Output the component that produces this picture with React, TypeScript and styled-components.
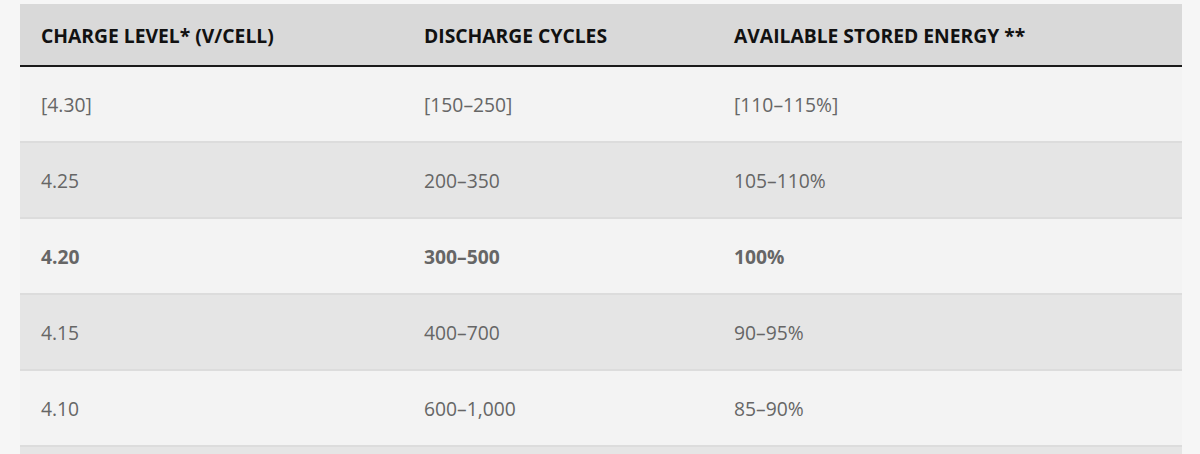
import styled, { createGlobalStyle } from "styled-components";

type TRow = {
  level: string;
  cycles: string;
  energy: string;
  strong?: boolean;
};

const ROWS: TRow[] = [
  { level: "[4.30]", cycles: "[150–250]", energy: "[110–115%]" },
  { level: "4.25", cycles: "200–350", energy: "105–110%" },
  { level: "4.20", cycles: "300–500", energy: "100%", strong: true },
  { level: "4.15", cycles: "400–700", energy: "90–95%" },
  { level: "4.10", cycles: "600–1,000", energy: "85–90%" },
];

const GlobalStyle = createGlobalStyle`
  html, body {
    margin: 0;
    padding: 0;
    background: #f6f6f6;
    overflow: hidden;
  }
  body {
    font-family: "Open Sans", "Noto Sans", sans-serif;
  }
`;

export default function App() {
  return (
    <>
      <GlobalStyle />
      <Page>
        <Table>
          <colgroup>
            <col style={{ width: 383 }} />
            <col style={{ width: 310 }} />
            <col />
          </colgroup>
          <thead>
            <tr>
              <HeadCell>Charge Level* (V/cell)</HeadCell>
              <HeadCell>Discharge Cycles</HeadCell>
              <HeadCell>Available Stored Energy **</HeadCell>
            </tr>
          </thead>
          <tbody>
            {ROWS.map((row, i) => (
              <Row key={row.level} $even={i % 2 === 1}>
                <Cell $strong={row.strong}>{row.level}</Cell>
                <Cell $strong={row.strong}>{row.cycles}</Cell>
                <Cell $strong={row.strong}>{row.energy}</Cell>
              </Row>
            ))}
            {/* next row peeks in at the bottom edge */}
            <Row $even={ROWS.length % 2 === 1}>
              <Cell />
              <Cell />
              <Cell />
            </Row>
          </tbody>
        </Table>
      </Page>
    </>
  );
}

const Page = styled.div`
  padding: 4px 18px 0 20px;
  height: 454px;
  box-sizing: border-box;
  overflow: hidden;
`;

const Table = styled.table`
  width: 1162px;
  border-collapse: collapse;
  table-layout: fixed;
`;

const HeadCell = styled.th`
  height: 62px;
  padding: 2px 21px 0;
  box-sizing: border-box;
  background: #d9d9d9;
  border-bottom: 2px solid #1a1a1a;
  text-align: left;
  text-transform: uppercase;
  font-size: 19.3px;
  font-weight: 700;
  color: #111;
  vertical-align: middle;
`;

const Row = styled.tr<{ $even?: boolean }>`
  background: ${(p) => (p.$even ? "#e5e5e5" : "#f3f3f3")};
  border-bottom: 2px solid #dcdcdc;
`;

const Cell = styled.td<{ $strong?: boolean }>`
  height: 76px;
  padding: 0 21px;
  box-sizing: border-box;
  font-size: 19.3px;
  font-weight: ${(p) => (p.$strong ? 700 : 400)};
  color: #666;
  vertical-align: middle;
`;
